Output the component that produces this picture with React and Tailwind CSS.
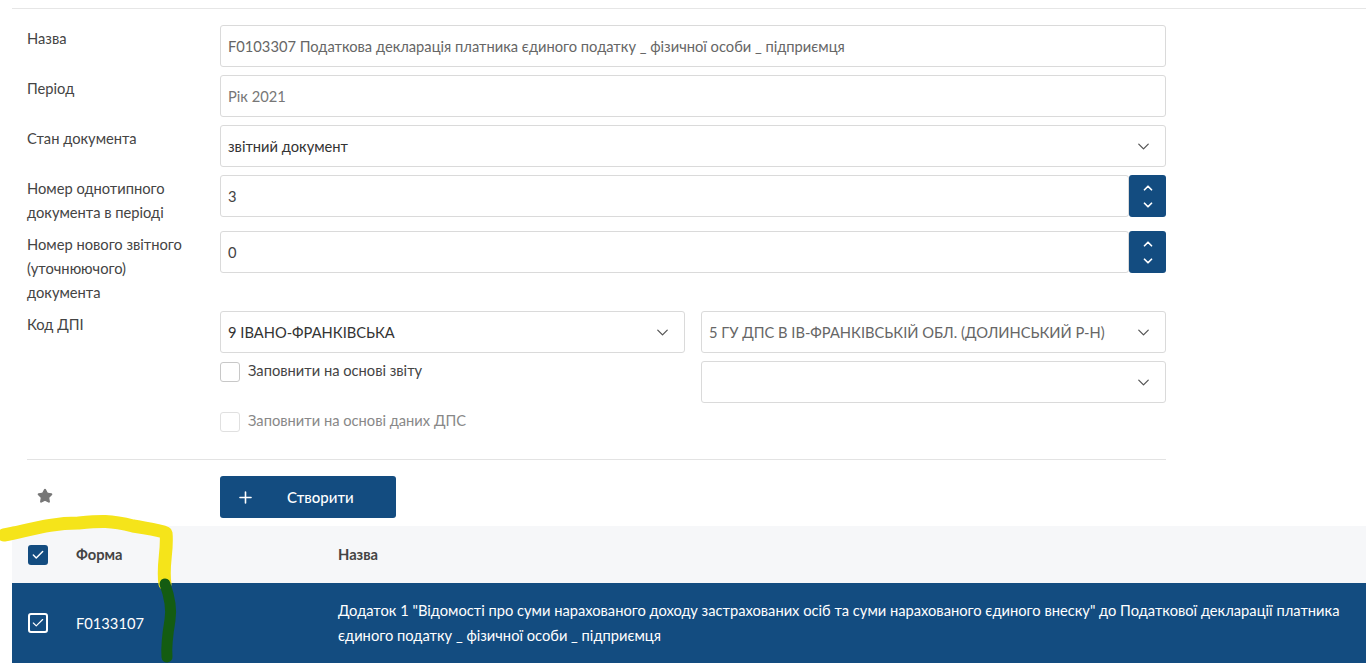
import { Star, Plus, ChevronDown, ChevronUp, Check } from "lucide-react";

const labelCls = "w-[193px] shrink-0 pt-px -mb-px text-[14.7px] leading-6 text-[#444]";
const boxCls = "h-[42px] flex items-center border border-[#dadada] rounded-[3px] bg-white pl-[7px] text-[14.7px]";

const Field = ({ label, children }) => (
  <div className="flex">
    <div className={labelCls}>{label}</div>
    <div className="flex-1">{children}</div>
  </div>
);

const Select = ({ value, muted }) => (
  <div className={`${boxCls} justify-between pr-[12px] ${muted ? "text-[#666]" : "text-[#333]"}`}>
    <span>{value}</span>
    <ChevronDown size={19} strokeWidth={1.6} className="text-[#555]" />
  </div>
);

const Spinner = ({ value }) => (
  <div className="flex h-[42px]">
    <div className={`${boxCls} flex-1 text-[#444]`}>{value}</div>
    <div className="w-[37px] bg-[#134c80] rounded-[3px] flex flex-col items-center justify-center gap-[3px] text-white">
      <ChevronUp size={14} strokeWidth={3} />
      <ChevronDown size={14} strokeWidth={3} />
    </div>
  </div>
);

const CheckRow = ({ label, disabled }) => (
  <div className="flex items-start gap-2 h-5">
    <div className={`w-5 h-5 rounded-[3px] border ${disabled ? "border-[#e0e0e0]" : "border-[#c8c8c8]"}`} />
    <span className={`text-[14.7px] leading-4 ${disabled ? "text-[#888]" : "text-[#444]"}`}>{label}</span>
  </div>
);

export default function App() {
  return (
    <div className="relative w-[1372px] h-[666px] overflow-hidden bg-white font-['Lato','Noto_Sans',sans-serif]">
      <div className="ml-3 w-[1354px] pt-2">
        <div className="border-t border-[#e6e6e6]" />

        <div className="pl-[15px] w-[1154px] pt-4 flex flex-col gap-2">
          <Field label="Назва">
            <div className={`${boxCls} text-[#666]`}>
              F0103307 Податкова декларація платника єдиного податку _ фізичної особи _ підприємця
            </div>
          </Field>
          <Field label="Період">
            <div className={`${boxCls} text-[#777]`}>Рік 2021</div>
          </Field>
          <Field label="Стан документа">
            <Select value="звітний документ" />
          </Field>
          <Field label={<>Номер однотипного<br />документа в періоді</>}>
            <Spinner value="3" />
          </Field>
          <Field label={<>Номер нового звітного<br />(уточнюючого)<br />документа</>}>
            <Spinner value="0" />
          </Field>
          <Field label="Код ДПІ">
            <div className="grid grid-cols-2 gap-4">
              <div className="flex flex-col">
                <Select value="9 ІВАНО-ФРАНКІВСЬКА" />
                <div className="mt-[9px]">
                  <CheckRow label="Заповнити на основі звіту" />
                </div>
                <div className="mt-[30px]">
                  <CheckRow label="Заповнити на основі даних ДПС" disabled />
                </div>
              </div>
              <div className="flex flex-col gap-2">
                <Select value="5 ГУ ДПС В ІВ-ФРАНКІВСЬКІЙ ОБЛ. (ДОЛИНСЬКИЙ Р-Н)" muted />
                <Select value="" />
              </div>
            </div>
          </Field>

          <div className="mt-[19px] border-t border-[#e3e3e3]" />

          <div className="flex items-center mt-2">
            <div className="w-[193px] shrink-0 pl-[10px] -mt-[3px]">
              <Star size={16} fill="#777" stroke="#777" />
            </div>
            <button className="w-[176px] h-[42px] bg-[#134c80] rounded-[3px] flex items-center pl-[16px] text-white">
              <Plus size={19} strokeWidth={2} />
              <span className="ml-[32px] text-[15px] font-medium">Створити</span>
            </button>
          </div>
        </div>

        <div className="mt-2">
          <div className="h-[57px] bg-[#f6f7f9] flex items-center text-[14.7px] font-bold text-[#444]">
            <div className="w-[64px] pl-4">
              <div className="w-5 h-5 rounded-[3px] bg-[#134c80] flex items-center justify-center text-white">
                <Check size={14} strokeWidth={2.5} />
              </div>
            </div>
            <div className="w-[262px]">Форма</div>
            <div>Назва</div>
          </div>
          <div className="h-[80px] bg-[#134c80] flex items-center text-[14.7px] text-white">
            <div className="w-[64px] pl-4">
              <div className="w-5 h-5 rounded-[3px] border-2 border-white flex items-center justify-center">
                <Check size={14} strokeWidth={2} />
              </div>
            </div>
            <div className="w-[262px]">F0133107</div>
            <div className="flex-1 pr-2 leading-[25px] whitespace-nowrap">
              Додаток 1 "Відомості про суми нарахованого доходу застрахованих осіб та суми нарахованого єдиного внеску" до Податкової декларації платника
              <br />
              єдиного податку _ фізичної особи _ підприємця
            </div>
          </div>
        </div>
      </div>

      <svg className="absolute inset-0 pointer-events-none" width="1372" height="666" viewBox="0 0 1372 666">
        <path
          d="M4 535 C 30 530, 50 523, 78 523 C 100 521, 110 520, 133 526 C 150 529, 160 530, 166 533 C 168 550, 162 565, 165 584"
          fill="none"
          stroke="#f5e41a"
          strokeWidth="13"
          strokeLinecap="round"
          strokeLinejoin="round"
        />
        <path
          d="M165 584 C 170 598, 172 608, 170 620 C 168 632, 166 645, 167 657"
          fill="none"
          stroke="#145c12"
          strokeWidth="11"
          strokeLinecap="round"
        />
      </svg>
    </div>
  );
}
